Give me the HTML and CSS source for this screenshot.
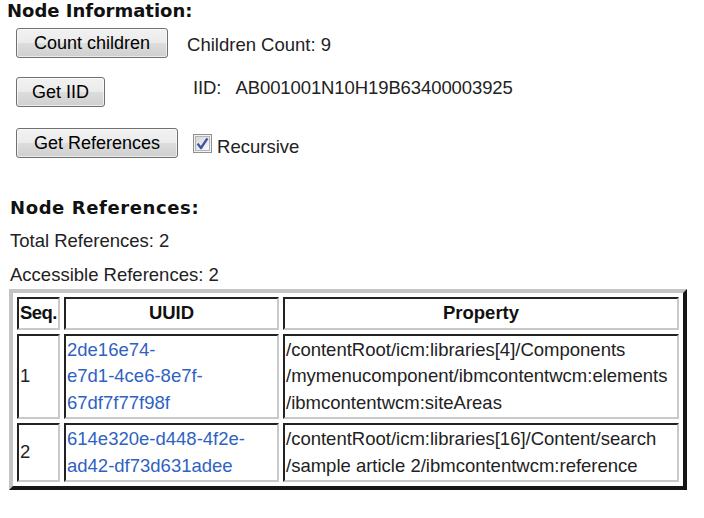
FILE: index.html
```html
<!DOCTYPE html>
<html lang="en">
<head>
    <meta charset="UTF-8">
    <title>Node Information</title>
    <link rel="stylesheet" href="styles.css">
</head>
<body>
    <div class="page">
        <h2 class="section-title info-title">Node Information:</h2>

        <div class="action-row row-count">
            <button type="button" class="btn">Count children</button>
            <span class="result count-result">Children Count: 9</span>
        </div>

        <div class="action-row row-iid">
            <button type="button" class="btn btn-iid">Get IID</button>
            <span class="result iid-result">IID:&nbsp;&nbsp; AB001001N10H19B63400003925</span>
        </div>

        <div class="action-row row-refs">
            <button type="button" class="btn">Get References</button>
            <label class="check">
                <span class="check-box">
                    <svg width="19" height="19" viewBox="0 0 19 19">
                        <defs>
                            <linearGradient id="boxFill" x1="0" y1="0" x2="1" y2="1">
                                <stop offset="0" stop-color="#d6d6d6"/>
                                <stop offset="1" stop-color="#fbfbfb"/>
                            </linearGradient>
                        </defs>
                        <rect x="0.5" y="0.5" width="18" height="18" fill="#f3f3f3" stroke="#8e8f8f"/>
                        <rect x="2.5" y="2.5" width="14" height="14" fill="url(#boxFill)" stroke="#b4b4b4"/>
                        <path d="M4.6 9.6 L8 14 L14.4 4.4" fill="none" stroke="#3f53a3" stroke-width="2.3" stroke-linejoin="round"/>
                    </svg>
                </span>
                <span class="check-text">Recursive</span>
            </label>
        </div>

        <h2 class="section-title refs-title">Node References:</h2>
        <p class="stat total-stat">Total References: 2</p>
        <p class="stat access-stat">Accessible References: 2</p>

        <table class="ref-table">
            <thead>
                <tr>
                    <th class="col-seq">Seq.</th>
                    <th class="col-uuid">UUID</th>
                    <th class="col-prop">Property</th>
                </tr>
            </thead>
            <tbody>
                <tr>
                    <td>1</td>
                    <td><a href="#" class="uuid-link">2de16e74-<br>e7d1-4ce6-8e7f-<br>67df7f77f98f</a></td>
                    <td>/contentRoot/icm:libraries[4]/Components<br>/mymenucomponent/ibmcontentwcm:elements<br>/ibmcontentwcm:siteAreas</td>
                </tr>
                <tr>
                    <td>2</td>
                    <td><a href="#" class="uuid-link">614e320e-d448-4f2e-<br>ad42-df73d631adee</a></td>
                    <td>/contentRoot/icm:libraries[16]/Content/search<br>/sample article 2/ibmcontentwcm:reference</td>
                </tr>
            </tbody>
        </table>
    </div>
</body>
</html>
```

FILE: styles.css
```css
/* General Reset */
* {
    margin: 0;
    padding: 0;
}

body {
    font-family: 'Liberation Sans', Arial, sans-serif;
    font-size: 18.5px;
    line-height: 22px;
    color: #222;
    background: #fff;
}

.page {
    padding: 0;
}

.section-title {
    font-family: 'DejaVu Sans', Verdana, sans-serif;
    font-size: 18px;
    font-weight: 700;
    line-height: 22px;
    color: #111;
}

.info-title {
    margin-left: 7px;
}

.refs-title {
    margin: 39px 0 0 10px;
    letter-spacing: 0.6px;
}

/* Action rows */
.action-row {
    display: flex;
    align-items: center;
    margin-left: 16px;
}

.row-count {
    margin-top: 6px;
}

.row-iid {
    margin-top: 19px;
}

.row-refs {
    margin-top: 21px;
}

.btn {
    font-family: 'Liberation Sans', Arial, sans-serif;
    font-size: 18px;
    line-height: 22px;
    color: #000;
    padding: 3px 17px;
    border: 1px solid #707070;
    border-radius: 3px;
    background: linear-gradient(#f2f2f2 0%, #ebebeb 50%, #dddddd 50%, #cfcfcf 100%);
    box-shadow: inset 0 0 0 1px rgba(255, 255, 255, 0.6);
    cursor: pointer;
}

.btn-iid {
    padding: 3px 15px;
}

.count-result {
    margin-left: 19px;
    padding-top: 3px;
}

.iid-result {
    margin-left: 88px;
    align-self: flex-start;
    letter-spacing: -0.1px;
}

.check {
    display: flex;
    align-items: center;
    margin-left: 15px;
}

.check-box {
    display: block;
    width: 19px;
    height: 19px;
}

.check-box svg {
    display: block;
}

.check-text {
    margin-left: 5px;
    padding-top: 8px;
}

/* Stats */
.stat {
    margin-left: 10px;
}

.total-stat {
    margin-top: 11px;
}

.access-stat {
    margin-top: 12px;
}

/* References table */
.ref-table {
    margin: 3px 0 0 9px;
    border-collapse: separate;
    border-spacing: 4px;
    border: 4px solid;
    border-color: #c4c4c4 #161616 #161616 #c4c4c4;
}

.ref-table th,
.ref-table td {
    border: 2px solid;
    border-color: #222 #c9c9c9 #c9c9c9 #222;
    padding: 1px;
    line-height: 26.5px;
    white-space: nowrap;
    text-align: left;
    vertical-align: middle;
}

.ref-table th {
    font-weight: 700;
    color: #111;
    text-align: center;
}

.ref-table th.col-seq {
    width: 37px;
    text-align: left;
    letter-spacing: -0.6px;
}

.col-uuid {
    width: 209px;
}

.col-prop {
    width: 390px;
}

.uuid-link {
    color: #2f62c2;
    text-decoration: none;
}
```
